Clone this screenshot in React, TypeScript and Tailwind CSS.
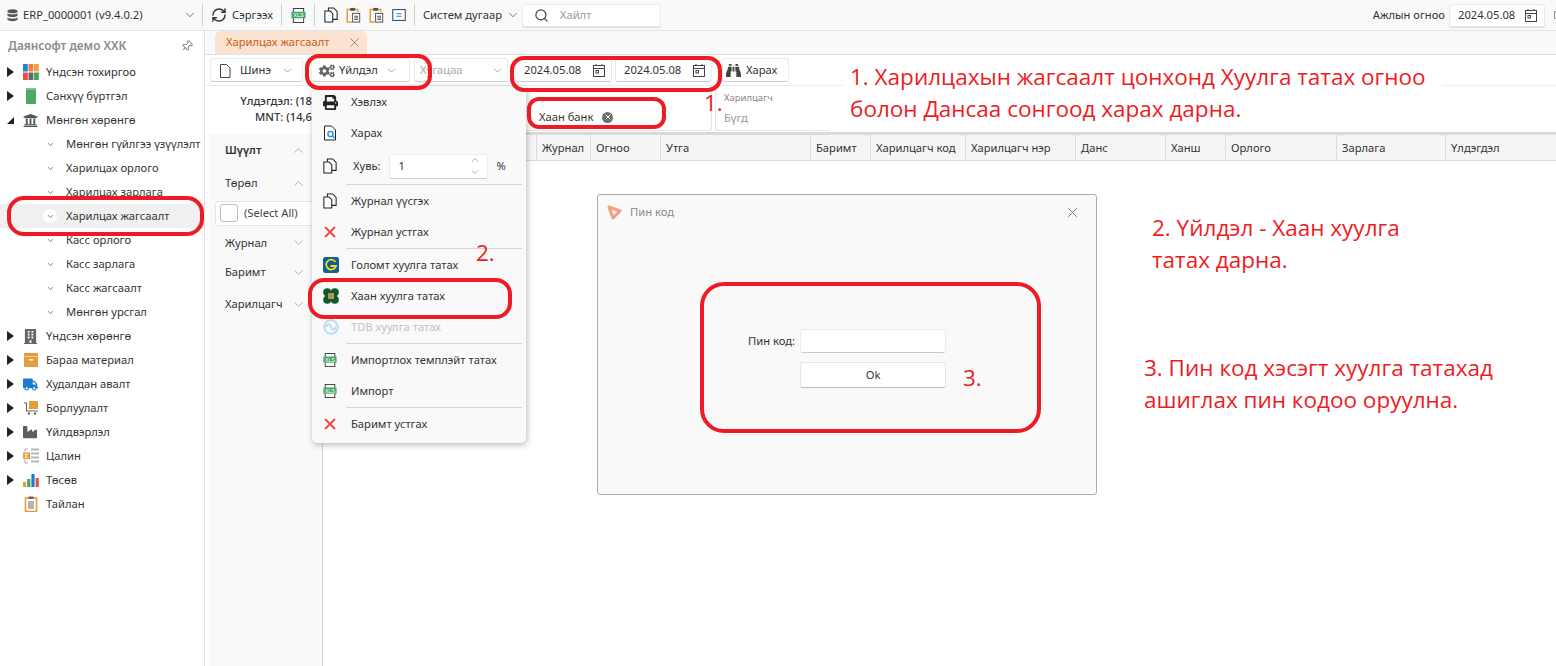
import React from "react";
import { FaBinoculars, FaBuilding, FaCogs, FaIndustry, FaPrint, FaTruck, FaUniversity } from "react-icons/fa";
import { ChevronDown, ChevronUp, RefreshCw, Search, Pin, X } from "lucide-react";

// icons
const Caret = ({ open }: { open?: boolean }) =>
  open ? (
    <svg width="9" height="9" viewBox="0 0 9 9" className="shrink-0"><path d="M8 1v7H1z" fill="#222" /></svg>
  ) : (
    <svg width="9" height="10" viewBox="0 0 9 10" className="shrink-0"><path d="M1 0l7 5-7 5z" fill="#222" /></svg>
  );

const Calendar = () => (
  <svg width="14" height="15" viewBox="0 0 14 15" fill="none" stroke="#444" className="shrink-0">
    <rect x="1.5" y="2.5" width="11" height="11" />
    <path d="M1.5 5.5h11M4 1v2M10 1v2" />
    <rect x="4" y="7.5" width="2.5" height="2.5" />
  </svg>
);

const Xls = ({ size = 14 }: { size?: number }) => (
  <svg width={size} height={size} viewBox="0 0 16 16" className="shrink-0">
    <rect x="2.5" y="0.5" width="11" height="15" fill="#fff" stroke="#333" />
    <rect x="0.5" y="4" width="15" height="7" fill="#45a866" />
    <text x="8" y="10" textAnchor="middle" fontSize="6" fill="#fff" fontFamily="Liberation Sans, sans-serif">XLS</text>
  </svg>
);

const CopyDoc = () => (
  <svg width="14" height="16" viewBox="0 0 16 18" fill="#fff" stroke="#222" strokeWidth="1.2" className="shrink-0">
    <path d="M5 1h6l4 4v9H5z" />
    <path d="M1 4.500h6l3 3v9.500H1z" />
  </svg>
);

const ClipDoc = () => (
  <svg width="15" height="16" viewBox="0 0 18 19" fill="none" className="shrink-0">
    <path d="M5 3H1.500v15H7M11 3h3v3" stroke="#ed9b33" strokeWidth="1.8" />
    <rect x="5" y="1" width="6" height="3.500" fill="#555" />
    <rect x="8" y="7.500" width="8.500" height="10.500" fill="#fff" stroke="#333" />
    <path d="M10 11h4.500M10 13h4.500M10 15h4.500" stroke="#333" />
  </svg>
);

const BlueDoc = () => (
  <svg width="14" height="12" viewBox="0 0 16 14" className="shrink-0">
    <rect x="0.700" y="0.700" width="14.600" height="12.600" fill="#fff" stroke="#33465a" strokeWidth="1.2" />
    <path d="M5 5.500h6M5 8.500h6" stroke="#1e88e5" strokeWidth="1.300" />
  </svg>
);

const Tiles = () => (
  <svg width="16" height="16" viewBox="0 0 16 16" className="shrink-0">
    {[
      ["#1b87d8", "#ef7b3c", "#efa23c"],
      ["#ef4b46", "#5f6a64", "#4aa35c"],
    ].map((row, r) =>
      row.map((c, i) => <rect key={c} x={i * 5.500} y={r * 8.500} width="4.800" height="7.500" fill={c} />)
    )}
  </svg>
);

const Book = () => (
  <svg width="16" height="16" viewBox="0 0 16 16" className="shrink-0">
    <rect x="3" y="0" width="10" height="16" rx="1" fill="#4aa862" />
    <rect x="3" y="0" width="10" height="2" fill="#7dc38f" />
  </svg>
);

const Box = () => (
  <svg width="16" height="16" viewBox="0 0 16 16" className="shrink-0">
    <rect x="1" y="1" width="14" height="3.500" fill="#e99a3a" />
    <rect x="1" y="5" width="14" height="10" fill="#e99a3a" />
    <rect x="6" y="7" width="4" height="1.500" fill="#fff" />
  </svg>
);

const Cart = () => (
  <svg width="16" height="16" viewBox="0 0 16 16" className="shrink-0">
    <rect x="6" y="1" width="9" height="8" fill="#e99a3a" />
    <path d="M1 3h2.500v8H15" fill="none" stroke="#666" strokeWidth="1.100" />
    <circle cx="6" cy="13.500" r="1.200" fill="#666" />
    <circle cx="12" cy="13.500" r="1.200" fill="#666" />
  </svg>
);

const Salary = () => (
  <svg width="16" height="16" viewBox="0 0 16 16" className="shrink-0">
    <rect x="0" y="4.500" width="7" height="6.500" fill="#e99a3a" />
    <text x="3.500" y="10" textAnchor="middle" fontSize="6" fontWeight="700" fill="#fff" fontFamily="Liberation Sans, sans-serif">Σ</text>
    <path d="M2 4V1h3M2 11.500V15h3" fill="none" stroke="#999" strokeWidth="0.800" />
    <path d="M8 1.500h8M8 5.500h8M8 9.500h8M8 13.500h8" stroke="#b5b5b5" strokeWidth="2.200" />
  </svg>
);

const Bars = () => (
  <svg width="16" height="14" viewBox="0 0 16 14" className="shrink-0">
    <rect x="0" y="9" width="3.200" height="5" fill="#e99a3a" />
    <rect x="4.200" y="6" width="3.200" height="8" fill="#4aa35c" />
    <rect x="8.400" y="1" width="3.200" height="13" fill="#1b7bd0" />
    <rect x="12.600" y="5" width="3.200" height="9" fill="#ef4b46" />
  </svg>
);

const Report = () => (
  <svg width="16" height="16" viewBox="0 0 16 16" className="shrink-0">
    <rect x="2.500" y="2" width="11" height="13.500" fill="#fff" stroke="#e99a3a" strokeWidth="1.600" />
    <rect x="5.500" y="0.500" width="5" height="2.500" fill="#666" />
    <path d="M5 6h6M5 8h6M5 10h6M5 12h6" stroke="#666" />
  </svg>
);

const Preview = () => (
  <svg width="14" height="16" viewBox="0 0 14 16" className="shrink-0">
    <path d="M1.500 1h7l4 4v10h-11z" fill="#fff" stroke="#222" />
    <circle cx="7.500" cy="9" r="2.600" fill="none" stroke="#1e88e5" strokeWidth="1.400" />
    <path d="M9.500 11l2 2" stroke="#1e88e5" strokeWidth="1.500" />
  </svg>
);

const RedX = () => (
  <svg width="14" height="14" viewBox="0 0 14 14" className="shrink-0">
    <path d="M2 2l10 10M12 2L2 12" stroke="#ee4b46" strokeWidth="2" />
  </svg>
);

const Golomt = () => (
  <svg width="16" height="16" viewBox="0 0 16 16" className="shrink-0">
    <rect width="16" height="16" rx="2.500" fill="#0c5f9e" />
    <path d="M12.500 5A5 5 0 1 0 13 9H7.500" fill="none" stroke="#f5d90a" strokeWidth="1.800" />
  </svg>
);

const Khan = () => (
  <svg width="16" height="16" viewBox="0 0 16 16" className="shrink-0">
    <circle cx="4.200" cy="4.200" r="4" fill="#0f5a2c" />
    <circle cx="11.800" cy="4.200" r="4" fill="#0f5a2c" />
    <circle cx="4.200" cy="11.800" r="4" fill="#0f5a2c" />
    <circle cx="11.800" cy="11.800" r="4" fill="#0f5a2c" />
    <rect x="5" y="5" width="6" height="6" fill="#b3924c" />
  </svg>
);

const Tdb = () => (
  <svg width="16" height="16" viewBox="0 0 16 16" fill="none" stroke="#b5dcf2" strokeWidth="1.800" className="shrink-0">
    <circle cx="8" cy="8" r="6.800" />
    <path d="M3 8c2-4 4-3 5 0s3 4 5 0" />
  </svg>
);

const AppLogo = () => (
  <svg width="17" height="17" viewBox="0 0 17 17" className="shrink-0">
    <path d="M3 3l11 4-7 7z" fill="#f9f9f9" stroke="#f4a07e" strokeWidth="3" strokeLinejoin="round" />
  </svg>
);

const Db = () => (
  <svg width="11" height="13" viewBox="0 0 11 13" className="shrink-0">
    <ellipse cx="5.500" cy="2.200" rx="5" ry="2" fill="#555" />
    <path d="M.500 4.300c1.500 1.600 8.500 1.600 10 0v2.500c-1.500 1.600-8.500 1.600-10 0zM.500 8.500c1.500 1.600 8.500 1.600 10 0v2.300c-1.500 1.900-8.500 1.900-10 0z" fill="#555" />
  </svg>
);

// sidebar
const modules: { label: string; icon: React.ReactNode; open?: boolean; noCaret?: boolean; children?: string[] }[] = [
  { label: "Үндсэн тохиргоо", icon: <Tiles /> },
  { label: "Санхүү бүртгэл", icon: <Book /> },
  {
    label: "Мөнгөн хөрөнгө",
    icon: <FaUniversity size={15} color="#555" />,
    open: true,
    children: [
      "Мөнгөн гүйлгээ үзүүлэлт",
      "Харилцах орлого",
      "Харилцах зарлага",
      "Харилцах жагсаалт",
      "Касс орлого",
      "Касс зарлага",
      "Касс жагсаалт",
      "Мөнгөн урсгал",
    ],
  },
  { label: "Үндсэн хөрөнгө", icon: <FaBuilding size={15} color="#666" /> },
  { label: "Бараа материал", icon: <Box /> },
  { label: "Худалдан авалт", icon: <FaTruck size={15} color="#1b7bd0" /> },
  { label: "Борлуулалт", icon: <Cart /> },
  { label: "Үйлдвэрлэл", icon: <FaIndustry size={14} color="#5e5e5e" /> },
  { label: "Цалин", icon: <Salary /> },
  { label: "Төсөв", icon: <Bars /> },
  { label: "Тайлан", icon: <Report />, noCaret: true },
];

const Sidebar = () => (
  <aside className="w-[205px] shrink-0 border-r border-[#e3e3e3] bg-white">
    <div className="flex h-[29px] items-center justify-between pl-2 pr-[11px] pt-[1px] text-[11.8px] font-semibold text-[#8a8a8a]">
      <span>Даянсофт демо ХХК</span>
      <Pin size={12} color="#888" className="rotate-45" />
    </div>
    <div>
      {modules.map((m) => (
        <div key={m.label}>
          <div className="flex h-6 items-center pl-[6px] text-[#333]">
            <span className="flex w-[17px] shrink-0">{!m.noCaret && <Caret open={m.open} />}</span>
            <span className="flex w-[23px] shrink-0 justify-start">{m.icon}</span>
            <span>{m.label}</span>
          </div>
          {m.children?.map((c) => {
            const active = c === "Харилцах жагсаалт";
            return (
              <div key={c} className={`flex h-6 items-center pl-[43px] text-[#333] ${active ? "bg-[#f0f0f0]" : ""}`}>
                <span className={`flex h-[14px] w-[14px] items-center justify-center rounded-full ${active ? "bg-white" : ""}`}>
                  <ChevronDown size={9} color="#666" strokeWidth={2.200} />
                </span>
                <span className="ml-[9px] whitespace-nowrap">{c}</span>
              </div>
            );
          })}
        </div>
      ))}
    </div>
  </aside>
);

// top bar
const Divider = () => <div className="mx-2 h-[22px] w-px bg-[#cfcfcf]" />;

const TopBar = () => (
  <header className="flex h-[31px] shrink-0 items-center border-b border-[#e3e3e3] bg-[#f9f9f9] pl-[7px] text-[#333]">
    <Db />
    <span className="ml-[5px] w-[160px]">ERP_0000001 (v9.4.0.2)</span>
    <ChevronDown size={14} color="#555" strokeWidth={1.300} />
    <div className="ml-[5px] mr-2 h-[22px] w-px bg-[#cfcfcf]" />
    <RefreshCw size={16} color="#333" strokeWidth={2.200} />
    <span className="ml-[5px]">Сэргээх</span>
    <Divider />
    <span className="ml-[1px]"><Xls size={15} /></span>
    <Divider />
    <span className="ml-[1px]"><CopyDoc /></span>
    <span className="ml-[8px]"><ClipDoc /></span>
    <span className="ml-[8px]"><ClipDoc /></span>
    <span className="ml-[8px]"><BlueDoc /></span>
    <Divider />
    <span>Систем дугаар</span>
    <ChevronDown size={14} color="#555" strokeWidth={1.300} className="ml-[4px]" />
    <div className="ml-[2px] flex h-[23px] w-[139px] items-center rounded-[3px] border border-[#ececec] bg-white pl-[11px] shadow-[0_1px_0_#ddd]">
      <Search size={15} color="#444" />
      <span className="ml-[11px] text-[#999]">Хайлт</span>
    </div>
    <div className="ml-auto flex items-center">
      <span>Ажлын огноо</span>
      <div className="ml-1 flex h-[23px] w-[96px] items-center justify-between rounded-[3px] border border-[#ececec] bg-white pl-2 pr-[6px] shadow-[0_1px_0_#ddd]">
        <span>2024.05.08</span>
        <Calendar />
      </div>
      <span className="ml-[9px] h-[8px] w-[2px] rounded-l-full border-y border-l border-[#888]" />
    </div>
  </header>
);

// toolbar
const ToolButton = ({ className, children }: { className: string; children: React.ReactNode }) => (
  <div className={`flex h-6 items-center rounded-[3px] border border-[#ebebeb] border-b-[#cfcfcf] bg-white pt-[1px] text-[#333] ${className}`}>
    {children}
  </div>
);

const DateBox = ({ className }: { className: string }) => (
  <ToolButton className={`justify-between pl-2 pr-[5px] ${className}`}>
    <span>2024.05.08</span>
    <Calendar />
  </ToolButton>
);

const Toolbar = () => (
  <div className="flex h-[31px] shrink-0 items-center border-b border-[#ececec] bg-white pl-[5px]">
    <ToolButton className="w-[93px] pl-2">
      <svg width="12" height="14" viewBox="0 0 12 14" fill="#fff" stroke="#444"><path d="M1.500.500h6l3.500 3.500v9.500h-9.500z" /></svg>
      <span className="ml-[9px]">Шинэ</span>
      <ChevronDown size={13} color="#777" strokeWidth={1.200} className="ml-auto mr-2" />
    </ToolButton>
    <ToolButton className="ml-2 w-[99px] pl-[7px]">
      <FaCogs size={16} color="#666" />
      <span className="ml-[4px]">Үйлдэл</span>
      <ChevronDown size={13} color="#777" strokeWidth={1.200} className="ml-auto mr-[11px]" />
    </ToolButton>
    <ToolButton className="ml-[4px] w-[94px] pl-[5px]">
      <span className="text-[#aaa]">Хугацаа</span>
      <ChevronDown size={13} color="#777" strokeWidth={1.200} className="ml-auto mr-[3px]" />
    </ToolButton>
    <DateBox className="ml-[7px] w-[97px]" />
    <DateBox className="ml-[3px] w-[97px]" />
    <ToolButton className="ml-[10px] w-[67px] pl-[3px]">
      <FaBinoculars size={15} color="#444" />
      <span className="ml-[5px]">Харах</span>
    </ToolButton>
  </div>
);

// filter panel under the summary
const FilterRow = ({ label, up, strong }: { label: string; up?: boolean; strong?: boolean }) => (
  <div className={`flex items-center justify-between pl-[16px] pr-[16px] text-[#333] ${strong ? "font-semibold" : ""}`}>
    <span>{label}</span>
    {up ? <ChevronUp size={15} color="#888" strokeWidth={1} /> : <ChevronDown size={15} color="#888" strokeWidth={1} />}
  </div>
);

const LeftPanel = () => (
  <div className="flex w-[118px] shrink-0 flex-col border-r border-[#d8d8d8] bg-white pl-[4px]">
    <div className="h-[48px] w-[103px] overflow-hidden whitespace-nowrap pt-[7px] text-right font-medium leading-[16px] text-[#333]">
      <div className="flex justify-end">Үлдэгдэл: (18</div>
      <div className="flex justify-end">MNT: (14,6</div>
    </div>
    <div className="flex-1 bg-[#f9f9f9] pt-[8px]">
      <FilterRow label="Шүүлт" up strong />
      <div className="mt-[16px]">
        <FilterRow label="Төрөл" up />
      </div>
      <div className="ml-[6px] mt-[9px] flex h-[25px] items-center rounded-l-[3px] border border-[#e6e6e6] bg-white pl-[4px]">
        <span className="h-[18px] w-[18px] rounded-[3px] border border-[#bdbdbd] bg-white" />
        <span className="ml-[6px] text-[#444]">(Select All)</span>
      </div>
      <div className="mt-[9px]">
        <FilterRow label="Журнал" />
      </div>
      <div className="mt-[13px]">
        <FilterRow label="Баримт" />
      </div>
      <div className="mt-[15px]">
        <FilterRow label="Харилцагч" />
      </div>
    </div>
  </div>
);

// grid header
const columns = [
  ["Журнал", "w-[54px]"],
  ["Огноо", "w-[70px]"],
  ["Утга", "w-[150px]"],
  ["Баримт", "w-[60px]"],
  ["Харилцагч код", "w-[95px]"],
  ["Харилцагч нэр", "w-[110px]"],
  ["Данс", "w-[90px]"],
  ["Ханш", "w-[60px]"],
  ["Орлого", "w-[111px]"],
  ["Зарлага", "w-[109px]"],
  ["Үлдэгдэл", "flex-1"],
];

const Grid = () => (
  <div className="flex min-w-0 flex-1 flex-col bg-white">
    <div className="flex h-[48px] shrink-0 border-b-2 border-[#d9d9d9] pb-[1px] pl-[170px]">
      <div className="flex h-[45px] w-[219px] items-center rounded-br-[3px] border-b border-r border-[#e6e6e6] pl-[46px] pt-[18px] text-[#333]">
        <span>Хаан банк</span>
        <span className="ml-[9px] flex h-[11px] w-[11px] items-center justify-center rounded-full bg-[#6e6e6e]">
          <X size={8} color="#fff" strokeWidth={3} />
        </span>
      </div>
      <div className="ml-[3px] flex h-[45px] w-[115px] flex-col rounded-bl-[3px] border-b border-l border-[#e6e6e6] pl-2 pt-[6px]">
        <span className="text-[9.5px] leading-[12px] text-[#888]">Харилцагч</span>
        <span className="mt-[7px] leading-[14px] text-[#999]">Бүгд</span>
      </div>
    </div>
    <div className="flex h-[27px] shrink-0 items-center border-y border-[#dcdcdc] bg-[#f5f5f5] text-[#333]">
      <div className="flex h-full w-[213px] items-center justify-end pr-[9px]">
        <ChevronUp size={6} color="#1b7bd0" strokeWidth={4} />
      </div>
      {columns.map(([name, w]) => (
        <div key={name} className={`flex h-full items-center whitespace-nowrap border-l border-[#dcdcdc] pl-[5px] pt-[2px] ${w}`}>
          {name}
        </div>
      ))}
    </div>
  </div>
);

// action menu
const MenuRow = ({ icon, label, muted }: { icon: React.ReactNode; label: string; muted?: boolean }) => (
  <div className={`flex h-[31px] items-center pl-[11px] ${muted ? "text-[#c2c2c2]" : "text-[#333]"}`}>
    <span className="flex w-[28px] shrink-0">{icon}</span>
    <span>{label}</span>
  </div>
);

const MenuLine = () => <div className="mb-[1px] ml-[34px] mr-[4px] h-px bg-[#d5d5d5]" />;

const ActionMenu = () => (
  <div className="absolute left-[312px] top-[86px] w-[214px] rounded-[5px] bg-[#f9f9f9] pb-[3px] pt-[0.500px] shadow-[1px_2px_6px_rgba(0,0,0,0.28)]">
    <MenuRow icon={<FaPrint size={15} color="#222" />} label="Хэвлэх" />
    <MenuRow icon={<Preview />} label="Харах" />
    <div className="flex h-[35px] items-center pl-[11px] text-[#333]">
      <span className="flex w-[30px] shrink-0"><CopyDoc /></span>
      <span>Хувь:</span>
      <div className="ml-[9px] flex h-[25px] w-[99px] items-center justify-between rounded-[3px] border border-[#ececec] border-b-[#cfcfcf] bg-white pl-2 pr-[6px]">
        <span>1</span>
        <span className="flex flex-col">
          <ChevronUp size={12} color="#666" strokeWidth={1} />
          <ChevronDown size={12} color="#666" strokeWidth={1} />
        </span>
      </div>
      <span className="ml-2">%</span>
    </div>
    <MenuLine />
    <MenuRow icon={<CopyDoc />} label="Журнал үүсгэх" />
    <MenuRow icon={<RedX />} label="Журнал устгах" />
    <MenuLine />
    <MenuRow icon={<Golomt />} label="Голомт хуулга татах" />
    <MenuRow icon={<Khan />} label="Хаан хуулга татах" />
    <MenuRow icon={<Tdb />} label="TDB хуулга татах" muted />
    <MenuLine />
    <MenuRow icon={<Xls />} label="Импортлох темплэйт татах" />
    <MenuRow icon={<Xls />} label="Импорт" />
    <MenuLine />
    <MenuRow icon={<RedX />} label="Баримт устгах" />
  </div>
);

// pin dialog
const PinDialog = () => (
  <div className="absolute left-[597px] top-[194px] flex h-[301px] w-[500px] flex-col rounded-[3px] border border-[#ababab] bg-[#f9f9f9]">
    <div className="flex h-[34px] items-center pl-[8px] pr-[15px]">
      <AppLogo />
      <span className="ml-[7px] text-[#8a8a8a]">Пин код</span>
      <X size={17} color="#555" strokeWidth={1} className="ml-auto" />
    </div>
    <div className="ml-[150px] mt-[100px] flex items-center">
      <span className="w-[47px] whitespace-nowrap text-right text-[#333]">Пин код:</span>
      <div className="ml-[5px] h-[24px] w-[146px] rounded-[3px] border border-[#ececec] border-b-[#c9c9c9] bg-white" />
    </div>
    <div className="ml-[202px] mt-[9px] flex h-[26px] w-[146px] items-center justify-center rounded-[3px] border border-[#e6e6e6] border-b-[#bdbdbd] bg-white text-[#333]">
      Ok
    </div>
  </div>
);

// red callouts drawn over the screenshot
const Ring = ({ className }: { className: string }) => (
  <div className={`pointer-events-none absolute border-[4px] border-[#ed1c24] ${className}`} />
);

const Note = ({ className, children }: { className: string; children: React.ReactNode }) => (
  <div className={`absolute whitespace-nowrap font-['Open_Sans',sans-serif] text-[22.5px] leading-[32px] text-[#ed1c24] ${className}`}>{children}</div>
);

export default function App() {
  return (
    <div className="relative flex h-[666px] w-full flex-col overflow-hidden bg-white font-['Noto_Sans',sans-serif] text-[11.2px]">
      <TopBar />
      <div className="flex min-h-0 flex-1">
        <Sidebar />
        <main className="flex min-w-0 flex-1 flex-col">
          <div className="flex h-[24px] shrink-0 items-end border-b border-[#e0e0e0] bg-[#f9f9f9] pl-[10px]">
            <div className="flex h-[23px] w-[152px] items-center justify-between rounded-t-[6px] bg-[#fbe3d0] pl-[11px] pr-[5px] text-[#c2601a]">
              <span>Харилцах жагсаалт</span>
              <X size={15} color="#555" strokeWidth={1} />
            </div>
          </div>
          <Toolbar />
          <div className="flex min-h-0 flex-1">
            <LeftPanel />
            <Grid />
          </div>
        </main>
      </div>

      <ActionMenu />
      <PinDialog />

      <div className="absolute left-[843px] top-[56px] h-[74px] w-[599px] bg-white" />

      <Ring className="left-[305px] top-[54px] h-[36px] w-[127px] rounded-[14px]" />
      <Ring className="left-[510px] top-[56px] h-[36px] w-[212px] rounded-[14px]" />
      <Ring className="left-[527px] top-[97px] h-[32px] w-[139px] rounded-[12px]" />
      <Ring className="left-[7px] top-[196px] h-[40px] w-[197px] rounded-[17px]" />
      <Ring className="left-[308px] top-[278px] h-[41px] w-[204px] rounded-[16px]" />
      <Ring className="left-[700px] top-[282px] h-[151px] w-[341px] rounded-[24px]" />

      <Note className="left-[850px] top-[61px]">1. Харилцахын жагсаалт цонхонд Хуулга татах огноо</Note>
      <Note className="left-[850px] top-[93px]">болон Дансаа сонгоод харах дарна.</Note>
      <Note className="left-[704px] top-[87px]">1.</Note>
      <Note className="left-[476px] top-[237px]">2.</Note>
      <Note className="left-[963px] top-[362px]">3.</Note>
      <Note className="left-[1152px] top-[212px]">2. Үйлдэл - Хаан хуулга</Note>
      <Note className="left-[1152px] top-[244px]">татах дарна.</Note>
      <Note className="left-[1144px] top-[352px]">3. Пин код хэсэгт хуулга татахад</Note>
      <Note className="left-[1144px] top-[384px]">ашиглах пин кодоо оруулна.</Note>
    </div>
  );
}
